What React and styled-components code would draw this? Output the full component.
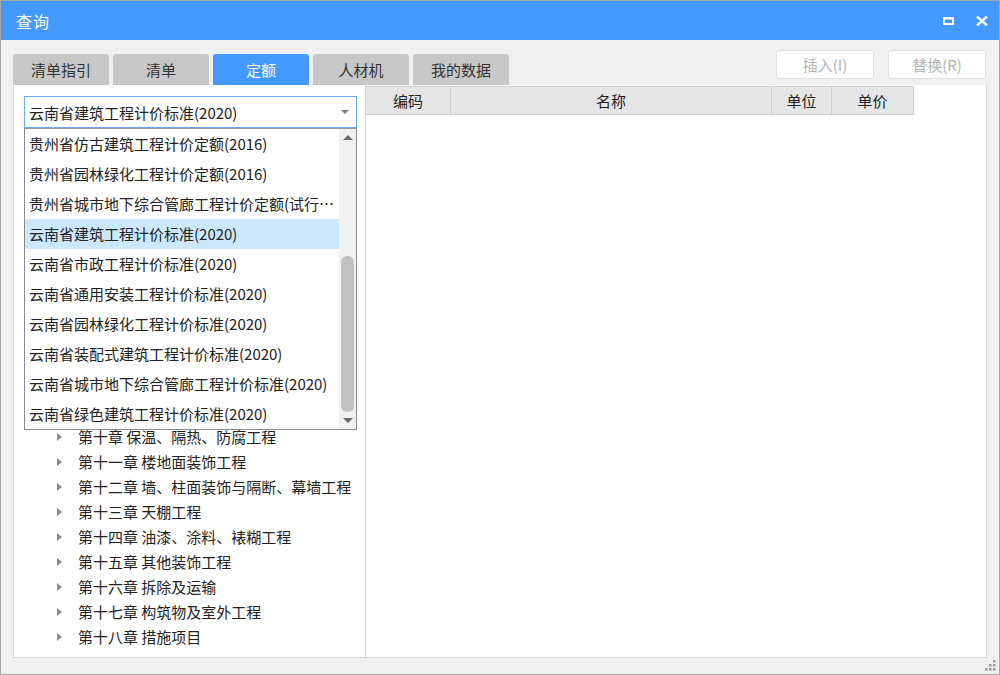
import React from "react";
import styled, { createGlobalStyle } from "styled-components";

const GlobalStyle = createGlobalStyle`
  html, body {
    margin: 0;
    padding: 0;
    background: #ffffff;
  }
  * {
    box-sizing: border-box;
  }
  body {
    font-family: "Noto Sans CJK SC", "Noto Sans", "Liberation Sans", sans-serif;
  }
`;

const BLUE = "#4499ff";

const Window = styled.div`
  position: relative;
  width: 1000px;
  height: 675px;
  border: 1px solid #a8a8a8;
  background: #f0f0f0;
  display: flex;
  flex-direction: column;
`;

const TitleBar = styled.div`
  height: 39px;
  background: ${BLUE};
  display: flex;
  align-items: center;
  padding: 0 7px 0 15px;
  color: #fff;
`;

const Title = styled.div`
  flex: 1;
  font-size: 16px;
  letter-spacing: 1px;
`;

const TitleButton = styled.button`
  width: 20px;
  height: 24px;
  margin-left: ${(p) => p.$gap || 0}px;
  border: none;
  background: transparent;
  padding: 0;
  display: flex;
  align-items: center;
  justify-content: center;
`;

const Body = styled.div`
  flex: 1;
  display: flex;
  flex-direction: column;
  padding: 10px 12px 16px 12px;
  min-height: 0;
`;

const TopRow = styled.div`
  height: 35px;
  display: flex;
  align-items: flex-end;
`;

const Tabs = styled.div`
  flex: 1;
  display: flex;
  gap: 4px;
`;

const Tab = styled.div`
  width: 96px;
  height: 31px;
  border-radius: 3px 3px 0 0;
  background: ${(p) => (p.$active ? BLUE : "#c8c8c8")};
  color: ${(p) => (p.$active ? "#fff" : "#333")};
  font-size: 15px;
  display: flex;
  align-items: center;
  justify-content: center;
  padding-bottom: 1px;
`;

const Actions = styled.div`
  align-self: flex-start;
  display: flex;
  gap: 14px;
  margin-right: 1px;
`;

const ActionButton = styled.button`
  width: 98px;
  height: 29px;
  border: 1px solid #e2e2e2;
  border-radius: 3px;
  background: #fff;
  color: #b4b4b4;
  font-family: inherit;
  font-size: 15px;
  padding: 0;
`;

const Panel = styled.div`
  flex: 1;
  display: flex;
  background: #fff;
  border: 1px solid #d4d4d4;
  border-top: none;
  min-height: 0;
`;

const LeftPane = styled.div`
  width: 352px;
  border-right: 1px solid #d4d4d4;
  padding: 11px 8px 0 10px;
  display: flex;
  flex-direction: column;
  overflow: hidden;
`;

const SelectWrap = styled.div`
  position: relative;
`;

const SelectBox = styled.div`
  height: 32px;
  border: 1px solid #6aa8ef;
  display: flex;
  align-items: center;
  padding: 0 6px 0 4px;
  font-size: 15px;
  color: #222;
`;

const SelectText = styled.span`
  flex: 1;
  white-space: nowrap;
`;

const Caret = styled.span`
  width: 0;
  height: 0;
  border-left: 4px solid transparent;
  border-right: 4px solid transparent;
  border-top: 4px solid #808080;
  margin-right: 1px;
`;

const CaretUp = styled.span`
  width: 0;
  height: 0;
  border-left: 5px solid transparent;
  border-right: 5px solid transparent;
  border-bottom: 5px solid #6c6c6c;
`;

const CaretDown = styled(CaretUp)`
  border-bottom: none;
  border-top: 5px solid #6c6c6c;
`;

const Dropdown = styled.div`
  position: absolute;
  top: 100%;
  left: 0;
  right: 0;
  z-index: 5;
  height: 302px;
  background: #fff;
  border: 1px solid #888c92;
  border-top: 1px solid #9a9a9a;
  display: flex;
`;

const OptionList = styled.div`
  flex: 1;
  min-width: 0;
`;

const Option = styled.div`
  height: 30px;
  line-height: 30px;
  padding-left: 4px;
  font-size: 15px;
  color: #222;
  white-space: nowrap;
  overflow: hidden;
  text-overflow: ellipsis;
  background: ${(p) => (p.$selected ? "#cce8ff" : "transparent")};
`;

const ScrollBar = styled.div`
  width: 17px;
  background: #f0f0f0;
  display: flex;
  flex-direction: column;
  align-items: center;
`;

const ScrollArrow = styled.div`
  height: 17px;
  display: flex;
  align-items: center;
  justify-content: center;
`;

const ScrollTrack = styled.div`
  flex: 1;
  width: 100%;
  display: flex;
  flex-direction: column;
  align-items: center;
  padding-top: ${(p) => p.$offset}px;
`;

const ScrollThumb = styled.div`
  width: 13px;
  height: ${(p) => p.$size}px;
  border-radius: 6px;
  background: #c2c2c2;
`;

/* the upper rows of the tree are scrolled under the open dropdown,
   so the list starts where the dropdown ends */
const Tree = styled.div`
  margin-top: 296px;
  display: flex;
  flex-direction: column;
`;

const TreeRow = styled.div`
  height: 25px;
  display: flex;
  align-items: center;
  padding-left: ${(p) => 9 + p.$level * 24}px;
  font-size: 15px;
  color: #222;
  white-space: nowrap;
`;

const Arrow = styled.span`
  width: 0;
  height: 0;
  margin-right: 16px;
  border-top: 4px solid transparent;
  border-bottom: 4px solid transparent;
  border-left: 5px solid #8a8a8a;
`;

const RightPane = styled.div`
  flex: 1;
  padding-top: 1px;
`;

const GridHeader = styled.div`
  display: flex;
`;

const HeaderCell = styled.div`
  width: ${(p) => p.$w}px;
  height: 29px;
  background: #e6e6e6;
  border: 1px solid #cfcfcf;
  border-left: none;
  display: flex;
  align-items: center;
  justify-content: center;
  font-size: 15px;
  color: #222;
`;

const Grip = styled.svg`
  position: absolute;
  right: 3px;
  bottom: 3px;
`;

const options = [
  "贵州省仿古建筑工程计价定额(2016)",
  "贵州省园林绿化工程计价定额(2016)",
  "贵州省城市地下综合管廊工程计价定额(试行)(2017)",
  "云南省建筑工程计价标准(2020)",
  "云南省市政工程计价标准(2020)",
  "云南省通用安装工程计价标准(2020)",
  "云南省园林绿化工程计价标准(2020)",
  "云南省装配式建筑工程计价标准(2020)",
  "云南省城市地下综合管廊工程计价标准(2020)",
  "云南省绿色建筑工程计价标准(2020)",
];

const treeRows = [
  "第十章 保温、隔热、防腐工程",
  "第十一章 楼地面装饰工程",
  "第十二章 墙、柱面装饰与隔断、幕墙工程",
  "第十三章 天棚工程",
  "第十四章 油漆、涂料、裱糊工程",
  "第十五章 其他装饰工程",
  "第十六章 拆除及运输",
  "第十七章 构筑物及室外工程",
  "第十八章 措施项目",
];

const tabs = ["清单指引", "清单", "定额", "人材机", "我的数据"];

const columns = [
  { title: "编码", w: 85 },
  { title: "名称", w: 321 },
  { title: "单位", w: 60 },
  { title: "单价", w: 82 },
];

export default function App() {
  return (
    <>
      <GlobalStyle />
      <Window>
        <TitleBar>
          <Title>查询</Title>
          <TitleButton aria-label="最大化">
            <svg width="11" height="8" viewBox="0 0 11 8">
              <path d="M0 0 H11 V8 H0 Z M2 2.5 V6 H9 V2.5 Z" fill="#fff" fillRule="evenodd" />
            </svg>
          </TitleButton>
          <TitleButton aria-label="关闭" $gap={14}>
            <svg width="12" height="10" viewBox="0 0 12 10">
              <path d="M1 0.5 L11 9.5 M11 0.5 L1 9.5" stroke="#fff" strokeWidth="2.4" />
            </svg>
          </TitleButton>
        </TitleBar>
        <Body>
          <TopRow>
            <Tabs>
              {tabs.map((t) => (
                <Tab key={t} $active={t === "定额"}>
                  {t}
                </Tab>
              ))}
            </Tabs>
            <Actions>
              <ActionButton disabled>插入(I)</ActionButton>
              <ActionButton disabled>替换(R)</ActionButton>
            </Actions>
          </TopRow>
          <Panel>
            <LeftPane>
              <SelectWrap>
                <SelectBox>
                  <SelectText>云南省建筑工程计价标准(2020)</SelectText>
                  <Caret />
                </SelectBox>
                <Dropdown>
                  <OptionList>
                    {options.map((o, i) => (
                      <Option key={i} $selected={i === 3}>
                        {o}
                      </Option>
                    ))}
                  </OptionList>
                  <ScrollBar>
                    <ScrollArrow>
                      <CaretUp />
                    </ScrollArrow>
                    <ScrollTrack $offset={110}>
                      <ScrollThumb $size={156} />
                    </ScrollTrack>
                    <ScrollArrow>
                      <CaretDown />
                    </ScrollArrow>
                  </ScrollBar>
                </Dropdown>
              </SelectWrap>
              <Tree>
                {treeRows.map((r) => (
                  <TreeRow key={r} $level={1}>
                    <Arrow />
                    {r}
                  </TreeRow>
                ))}
              </Tree>
            </LeftPane>
            <RightPane>
              <GridHeader>
                {columns.map((c) => (
                  <HeaderCell key={c.title} $w={c.w}>
                    {c.title}
                  </HeaderCell>
                ))}
              </GridHeader>
            </RightPane>
          </Panel>
        </Body>
        <Grip width="11" height="11" viewBox="0 0 11 11">
          {[
            [8, 0],
            [4, 4],
            [8, 4],
            [0, 8],
            [4, 8],
            [8, 8],
          ].map(([x, y]) => (
            <rect key={`${x}-${y}`} x={x} y={y} width="2.5" height="2.5" fill="#9a9a9a" />
          ))}
        </Grip>
      </Window>
    </>
  );
}
